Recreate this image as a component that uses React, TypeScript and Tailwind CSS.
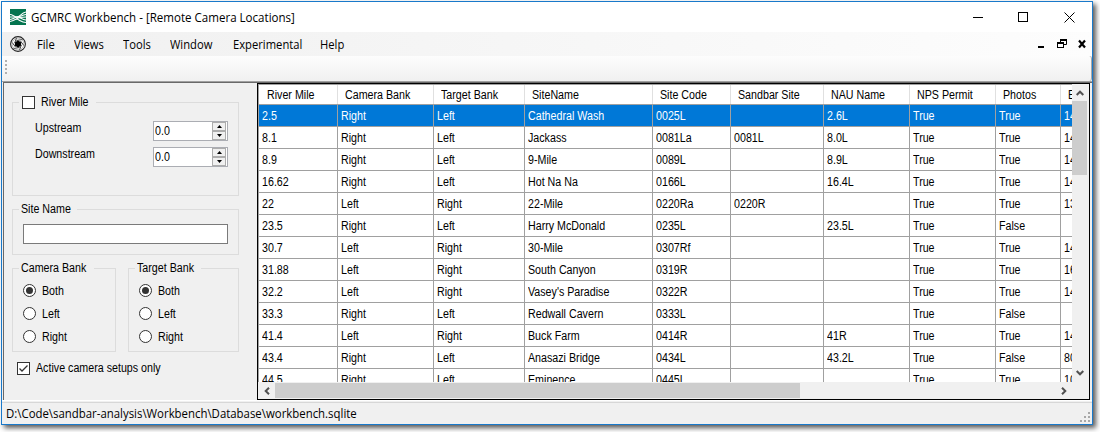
import type { ReactNode } from "react";

const columns = [
  { label: "River Mile", width: "w-[79px]" },
  { label: "Camera Bank", width: "w-[96px]" },
  { label: "Target Bank", width: "w-[91px]" },
  { label: "SiteName", width: "w-[128px]" },
  { label: "Site Code", width: "w-[78px]" },
  { label: "Sandbar Site", width: "w-[93px]" },
  { label: "NAU Name", width: "w-[86px]" },
  { label: "NPS Permit", width: "w-[86px]" },
  { label: "Photos", width: "w-[65px]" },
  { label: "E", width: "w-[90px]" },
];

const rows = [
  ["2.5", "Right", "Left", "Cathedral Wash", "0025L", "", "2.6L", "True", "True", "14"],
  ["8.1", "Right", "Left", "Jackass", "0081La", "0081L", "8.0L", "True", "True", "14"],
  ["8.9", "Right", "Left", "9-Mile", "0089L", "", "8.9L", "True", "True", "14"],
  ["16.62", "Right", "Left", "Hot Na Na", "0166L", "", "16.4L", "True", "True", "14"],
  ["22", "Left", "Right", "22-Mile", "0220Ra", "0220R", "", "True", "True", "13"],
  ["23.5", "Right", "Left", "Harry McDonald", "0235L", "", "23.5L", "True", "False", ""],
  ["30.7", "Left", "Right", "30-Mile", "0307Rf", "", "", "True", "True", "14"],
  ["31.88", "Left", "Right", "South Canyon", "0319R", "", "", "True", "True", "16"],
  ["32.2", "Left", "Right", "Vasey's Paradise", "0322R", "", "", "True", "True", "14"],
  ["33.3", "Right", "Left", "Redwall Cavern", "0333L", "", "", "True", "False", ""],
  ["41.4", "Left", "Right", "Buck Farm", "0414R", "", "41R", "True", "True", "14"],
  ["43.4", "Right", "Left", "Anasazi Bridge", "0434L", "", "43.2L", "True", "False", "80"],
  ["44.5", "Right", "Left", "Eminence", "0445L", "", "", "True", "True", "10"],
];

function Label({ children }: { children: ReactNode }) {
  return (
    <span className="inline-block origin-left scale-x-[0.89] whitespace-nowrap text-[12px] leading-[14px]">
      {children}
    </span>
  );
}

function UiText({ children, scale = "scale-x-[0.95]" }: { children: ReactNode; scale?: string }) {
  return (
    <span className={`inline-block origin-left ${scale} whitespace-nowrap font-['Open_Sans','Noto_Sans',sans-serif] text-[12px] leading-4`}>
      {children}
    </span>
  );
}

function Chevron({ className = "" }: { className?: string }) {
  return (
    <svg viewBox="0 0 8 6" className={`h-[6px] w-[8px] shrink-0 ${className}`}>
      <path d="M0.7 5 L4 1.7 L7.3 5" fill="none" stroke="#505050" strokeWidth="2" />
    </svg>
  );
}

function GroupBox({ title, className, children }: { title: ReactNode; className: string; children?: ReactNode }) {
  return (
    <div className={`border border-[#dcdcdc] ${className}`}>
      <div className="-mt-[8px] ml-[6px] flex h-[14px] w-max items-center bg-[#f0f0f0]">{title}</div>
      {children}
    </div>
  );
}

function Spinner() {
  return (
    <div className="flex h-[20px] w-[75px] justify-between border border-[#abadb3] bg-white">
      <span className="ml-[1px] flex h-[17px] items-center"><Label>0.0</Label></span>
      <div className="mr-px flex w-[14px] flex-col bg-[#f0f0f0]">
        {[false, true].map((down) => (
          <span key={String(down)} className="flex flex-1 items-center justify-center border border-[#adadad]">
            <svg viewBox="0 0 5 3" className={down ? "h-[3px] w-[5px] rotate-180" : "h-[3px] w-[5px]"}>
              <path d="M0 3 L2.5 0 L5 3 Z" fill="#000" />
            </svg>
          </span>
        ))}
      </div>
    </div>
  );
}

function Radio({ label, checked = false }: { label: string; checked?: boolean }) {
  return (
    <div className="flex h-[23px] items-center">
      <span className="mr-[6px] flex size-[13px] items-center justify-center rounded-full border border-[#333] bg-white">
        {checked && <span className="size-[7px] rounded-full bg-[#333]" />}
      </span>
      <Label>{label}</Label>
    </div>
  );
}

function BankGroup({ title, className }: { title: string; className: string }) {
  return (
    <GroupBox title={<span className="ml-[2px] flex"><Label>{title}</Label></span>} className={`h-[84px] ${className}`}>
      <div className="ml-[10px] mt-[4px]">
        <Radio label="Both" checked />
        <Radio label="Left" />
        <Radio label="Right" />
      </div>
    </GroupBox>
  );
}

function TitleBar() {
  return (
    <div className="flex h-[30px] shrink-0 items-center bg-white pl-[8px]">
      <svg viewBox="0 0 16 16" className="size-4 bg-[#04744f]">
        <g fill="none" stroke="#fff" strokeWidth="1.1">
          <path d="M0 5.5 C3 5.5 4 8 7 8 S11 4 16 3" />
          <path d="M0 8 H7 C10 8 12 6 16 5.5" />
          <path d="M0 12.5 C4 12 7 9 10 8.500 S14 8 16 8" />
          <path d="M0 10.5 C3 10 5 8.500 7 8 C10 8 12 11 16 11" />
          <path d="M6 10 C9 10 11 13.500 16 13.500" />
        </g>
      </svg>
      <span className="ml-[5px] flex-1"><UiText scale="scale-x-[0.963]">GCMRC Workbench - [Remote Camera Locations]</UiText></span>
      <svg viewBox="0 0 102 11" className="mr-[17px] h-[11px] w-[102px]" fill="none" stroke="#000">
        <path d="M0 5.5 H10" />
        <rect x="45.5" y="0.5" width="9" height="9" />
        <path d="M91.500 0.5 L101.500 10.5 M101.500 0.5 L91.500 10.5" />
      </svg>
    </div>
  );
}

const menus = [
  { label: "File", width: "w-[37px]" },
  { label: "Views", width: "w-[49px]" },
  { label: "Tools", width: "w-[47px]" },
  { label: "Window", width: "w-[63px]" },
  { label: "Experimental", width: "w-[87px]" },
  { label: "Help", width: "w-[40px]" },
];

function MenuBar() {
  return (
    <div className="flex h-[24px] shrink-0 items-center bg-linear-to-r from-[#f0f0f0] to-[#fdfdfd] pl-[8px]">
      <svg viewBox="0 0 16 16" className="mr-[11px] size-4" fill="none" stroke="#222">
        <circle cx="8" cy="8" r="7.4" strokeWidth="1.1" fill="#fff" />
        <path d="M8 4.400 L11.100 6.200 V9.800 L8 11.600 L4.900 9.800 V6.200 Z" fill="#000" stroke="none" />
        <path
          d="M6.500 4.500 L12.500 3.500 M10.500 5 L13.800 9.500 M11.300 9 L9.500 14 M9.500 11.500 L3.500 12.500 M5.500 11 L2.200 6.500 M4.700 7 L6.500 2"
          strokeWidth="0.9"
        />
        <circle cx="8" cy="8" r="5.900" strokeWidth="0.5" stroke="#777" />
      </svg>
      {menus.map((m) => (
        <span key={m.label} className={`shrink-0 ${m.width}`}><UiText scale="scale-x-[0.935]">{m.label}</UiText></span>
      ))}
      <svg viewBox="0 0 48 10" className="ml-auto mr-[6px] h-[10px] w-[48px]" fill="none" stroke="#000">
        <path d="M0 8 H6" strokeWidth="2" />
        <path d="M22.500 3 V0.5 H28.500 V5.500 H26" />
        <path d="M22 1 H29" strokeWidth="2" />
        <rect x="19.500" y="3.500" width="6" height="5" />
        <path d="M19 4 H26" strokeWidth="2" />
        <path d="M41 1.500 L47 8.500 M47 1.500 L41 8.500" strokeWidth="2.200" />
      </svg>
    </div>
  );
}

function Filters() {
  return (
    <div className="h-full w-[254px] shrink-0 border-l border-[#696969] pl-[8px] pt-[19px]">
      <GroupBox
        className="h-[94px] w-[227px]"
        title={
          <span className="flex items-center pr-[2px]">
            <span className="ml-[3px] mr-[6px] size-[13px] border border-[#333] bg-white" />
            <Label>River Mile</Label>
          </span>
        }
      >
        <div className="ml-[22px] mr-[10px] mt-[12px] flex flex-col gap-[6px]">
          <div className="flex justify-between"><Label>Upstream</Label><Spinner /></div>
          <div className="flex justify-between"><Label>Downstream</Label><Spinner /></div>
        </div>
      </GroupBox>
      <GroupBox className="mt-[13px] h-[46px] w-[227px]" title={<span className="ml-[2px] flex"><Label>Site Name</Label></span>}>
        <div className="ml-[10px] mt-[8px] h-[20px] w-[205px] border border-[#7a7a7a] bg-white" />
      </GroupBox>
      <div className="mt-[13px] flex gap-[12px]">
        <BankGroup title="Camera Bank" className="w-[104px]" />
        <BankGroup title="Target Bank" className="w-[111px]" />
      </div>
      <div className="ml-[5px] mt-[9px] flex items-center">
        <svg viewBox="0 0 13 13" className="mr-[6px] size-[13px]" fill="#fff" stroke="#333">
          <rect x="0.5" y="0.5" width="12" height="12" />
          <path d="M2.500 6.500 L5 9 L10.500 3.500" fill="none" strokeWidth="1.300" />
        </svg>
        <Label>Active camera setups only</Label>
      </div>
    </div>
  );
}

function Grid() {
  return (
    <div className="flex h-[317px] w-[833px] flex-col border border-black bg-[#f0f0f0]">
      <div className="flex h-[298px] shrink-0">
        <div className="h-full w-[814px] shrink-0 overflow-hidden border-l border-t border-[#a0a0a0] bg-white">
          <div className="flex h-[20px] w-max border-b border-[#a0a0a0]">
            {columns.map((c, j) => (
              <div key={c.label} className={`flex items-center border-r border-[#e0e0e0] ${j === 0 ? "pl-[8px]" : "pl-[7px]"} ${c.width}`}>
                <Label>{c.label}</Label>
              </div>
            ))}
          </div>
          {rows.map((row, i) => (
            <div key={row[0]} className={`flex h-[22px] w-max border-b border-[#a0a0a0] ${i === 0 ? "bg-[#0078d7] text-white" : ""}`}>
              {row.map((cell, j) => (
                <div key={columns[j].label} className={`flex items-center border-r border-[#a0a0a0] pl-[3px] ${columns[j].width}`}>
                  <Label>{cell}</Label>
                </div>
              ))}
            </div>
          ))}
        </div>
        <div className="flex w-[15px] flex-col items-center">
          <div className="flex h-[17px] items-center"><Chevron /></div>
          <div className="h-[74px] w-full bg-[#cdcdcd]" />
          <Chevron className="mb-[6px] mt-auto rotate-180" />
        </div>
      </div>
      <div className="mt-[1px] flex h-[15px] w-[814px] items-center">
        <div className="flex w-[17px] justify-center"><Chevron className="-rotate-90" /></div>
        <div className="h-full w-[525px] bg-[#cdcdcd]" />
        <Chevron className="ml-auto mr-[4px] rotate-90" />
      </div>
    </div>
  );
}

export default function App() {
  return (
    <div className="h-[432px] w-[1100px] overflow-hidden bg-white pl-[1px] pt-[1px] font-['Liberation_Sans',Arial,sans-serif] text-black">
      <div className="flex h-[424px] w-[1092px] flex-col border border-[#1979ca] bg-[#f0f0f0] shadow-[3px_3px_5px_rgba(0,0,0,0.65)]">
        <TitleBar />
        <MenuBar />
        <div className="h-[25px] shrink-0 rounded-r-[3px] border-r border-[#a8a8a8] bg-linear-to-b from-[#fdfdfd] to-[#f0f0f0] pl-[3px] pt-[4px]">
          <div className="flex flex-col gap-[2px]">
            {[0, 1, 2, 3].map((n) => <span key={n} className="size-[2px] bg-[#b0b0b0]" />)}
          </div>
        </div>
        <div className="h-[319px] shrink-0 border-t border-[#a0a0a0] pl-[1px]">
          <div className="flex h-[318px] border-t border-[#696969]">
            <Filters />
            <Grid />
          </div>
        </div>
        <div className="h-[2px] shrink-0 border-t border-white" />
        <div className="flex flex-1 items-center justify-between border-t border-[#d7d7d7] pl-[4px]">
          <UiText>D:\Code\sandbar-analysis\Workbench\Database\workbench.sqlite</UiText>
          <svg viewBox="0 0 10 10" className="mr-[2px] mt-[6px] size-[10px]" fill="#a8a8a8">
            <path d="M8 0h2v2h-2z M4 4h2v2h-2z M8 4h2v2h-2z M0 8h2v2h-2z M4 8h2v2h-2z M8 8h2v2h-2z" />
          </svg>
        </div>
      </div>
    </div>
  );
}
